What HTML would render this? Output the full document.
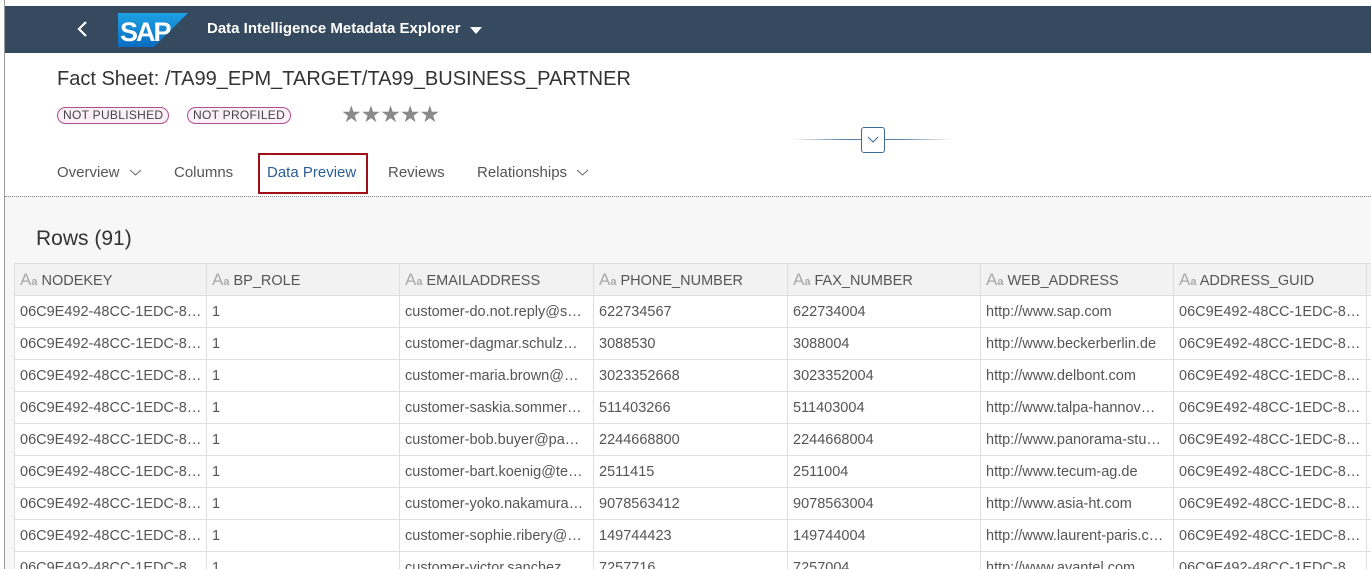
<!DOCTYPE html>
<html><head><meta charset="utf-8"><style>
*{margin:0;padding:0;box-sizing:border-box}
html,body{width:1371px;height:569px;overflow:hidden}
body{background:#fff;font-family:"Liberation Sans",Arial,sans-serif;position:relative}
.abs{position:absolute}
#bar{left:5px;top:6px;width:1366px;height:47px;background:#354a5f}
#lb{left:4px;top:0;width:1px;height:569px;background:#9a9a9a}
#content{left:5px;top:196px;width:1366px;height:373px;background:#f7f7f7;border-top:1px dotted #888}
.tag{position:absolute;top:107px;height:17px;border:1px solid #b0508f;border-radius:9px;background:#fbf0f7;font-size:12px;color:#444;line-height:15px;padding:0 5px;letter-spacing:.3px}
.tab{position:absolute;top:164px;font-size:15px;color:#555}
#wrap{position:absolute;left:14px;top:263px;width:1357px;height:306px;overflow:hidden}
table{border-collapse:collapse;table-layout:fixed;width:1366px}
td,th{height:32px;border:1px solid #ddd;font-size:14.5px;color:#555;text-align:left;padding:0 5px;white-space:nowrap;overflow:hidden;font-weight:normal;background:#fff}
th{background:#f2f2f2;color:#555}
th i{font-style:normal;color:#aaa;font-size:17px}
th i b{font-size:11px;font-weight:bold;color:#aaa}
</style></head><body>
<div class="abs" id="bar"></div>
<div class="abs" id="lb"></div>
<svg class="abs" style="left:76px;top:20px" width="14" height="18"><path d="M10 2 L3 9 L10 16" stroke="#fff" stroke-width="2.2" fill="none"/></svg>
<svg class="abs" style="left:118px;top:13px" width="70" height="34"><defs><linearGradient id="g" x1="0" y1="0" x2="0" y2="1"><stop offset="0" stop-color="#1da1e3"/><stop offset="1" stop-color="#0a6cc0"/></linearGradient></defs><polygon points="0,0 70,0 36,34 0,34" fill="url(#g)"/><text x="2" y="28" font-family="Liberation Sans" font-weight="bold" font-size="27" fill="#fff" letter-spacing="-2">SAP</text></svg>
<div class="abs" style="left:207px;top:20px;color:#fff;font-weight:bold;font-size:15px">Data Intelligence Metadata Explorer</div>
<svg class="abs" style="left:470px;top:27px" width="12" height="8"><polygon points="0,0 12,0 6,7" fill="#fff"/></svg>
<div class="abs" style="left:57px;top:68px;font-size:20px;color:#333">Fact Sheet: /TA99_EPM_TARGET/TA99_BUSINESS_PARTNER</div>
<div class="tag" style="left:57px">NOT PUBLISHED</div>
<div class="tag" style="left:187px">NOT PROFILED</div>
<div class="abs" style="left:341px;top:101px;font-size:23px;color:#8a8a8a;letter-spacing:-1px">★★★★★</div>
<div class="abs" style="left:792px;top:139px;width:160px;height:1px;background:linear-gradient(90deg,transparent,#5b7fa8,#5b7fa8,transparent)"></div>
<div class="abs" style="left:861px;top:127px;width:24px;height:26px;border:1px solid #3d6b9c;border-radius:3px;background:#fff"></div>
<svg class="abs" style="left:867px;top:136px" width="12" height="8"><path d="M1 1 L6 6 L11 1" stroke="#3d6b9c" fill="none"/></svg>
<div class="tab" style="left:57px">Overview</div>
<svg class="abs" style="left:129px;top:169px" width="13" height="8"><path d="M1 1 L6.5 6 L12 1" stroke="#666" fill="none"/></svg>
<div class="tab" style="left:174px">Columns</div>
<div class="abs" style="left:258px;top:153px;width:110px;height:41px;border:2px solid #a0101b"></div>
<div class="tab" style="left:267px;color:#2b5e99">Data Preview</div>
<div class="tab" style="left:388px">Reviews</div>
<div class="tab" style="left:477px">Relationships</div>
<svg class="abs" style="left:576px;top:169px" width="13" height="8"><path d="M1 1 L6.5 6 L12 1" stroke="#666" fill="none"/></svg>
<div class="abs" id="content"></div>
<div class="abs" style="left:36px;top:227px;font-size:21px;color:#333">Rows (91)</div>
<div id="wrap"><table>
<colgroup><col style="width:192px"><col style="width:193px"><col style="width:194px"><col style="width:194px"><col style="width:193px"><col style="width:193px"><col style="width:193px"><col style="width:14px"></colgroup>
<tr><th><i>A<b>a</b></i> NODEKEY</th><th><i>A<b>a</b></i> BP_ROLE</th><th><i>A<b>a</b></i> EMAILADDRESS</th><th><i>A<b>a</b></i> PHONE_NUMBER</th><th><i>A<b>a</b></i> FAX_NUMBER</th><th><i>A<b>a</b></i> WEB_ADDRESS</th><th><i>A<b>a</b></i> ADDRESS_GUID</th><th></th></tr>
<tr><td>06C9E492-48CC-1EDC-8…</td><td>1</td><td>customer-do.not.reply@s…</td><td>622734567</td><td>622734004</td><td>http://www.sap.com</td><td>06C9E492-48CC-1EDC-8…</td><td></td></tr>
<tr><td>06C9E492-48CC-1EDC-8…</td><td>1</td><td>customer-dagmar.schulz…</td><td>3088530</td><td>3088004</td><td>http://www.beckerberlin.de</td><td>06C9E492-48CC-1EDC-8…</td><td></td></tr>
<tr><td>06C9E492-48CC-1EDC-8…</td><td>1</td><td>customer-maria.brown@…</td><td>3023352668</td><td>3023352004</td><td>http://www.delbont.com</td><td>06C9E492-48CC-1EDC-8…</td><td></td></tr>
<tr><td>06C9E492-48CC-1EDC-8…</td><td>1</td><td>customer-saskia.sommer…</td><td>511403266</td><td>511403004</td><td>http://www.talpa-hannov…</td><td>06C9E492-48CC-1EDC-8…</td><td></td></tr>
<tr><td>06C9E492-48CC-1EDC-8…</td><td>1</td><td>customer-bob.buyer@pa…</td><td>2244668800</td><td>2244668004</td><td>http://www.panorama-stu…</td><td>06C9E492-48CC-1EDC-8…</td><td></td></tr>
<tr><td>06C9E492-48CC-1EDC-8…</td><td>1</td><td>customer-bart.koenig@te…</td><td>2511415</td><td>2511004</td><td>http://www.tecum-ag.de</td><td>06C9E492-48CC-1EDC-8…</td><td></td></tr>
<tr><td>06C9E492-48CC-1EDC-8…</td><td>1</td><td>customer-yoko.nakamura…</td><td>9078563412</td><td>9078563004</td><td>http://www.asia-ht.com</td><td>06C9E492-48CC-1EDC-8…</td><td></td></tr>
<tr><td>06C9E492-48CC-1EDC-8…</td><td>1</td><td>customer-sophie.ribery@…</td><td>149744423</td><td>149744004</td><td>http://www.laurent-paris.c…</td><td>06C9E492-48CC-1EDC-8…</td><td></td></tr>
<tr><td>06C9E492-48CC-1EDC-8…</td><td>1</td><td>customer-victor.sanchez…</td><td>7257716</td><td>7257004</td><td>http://www.avantel.com</td><td>06C9E492-48CC-1EDC-8…</td><td></td></tr>
</table></div>
</body></html>
